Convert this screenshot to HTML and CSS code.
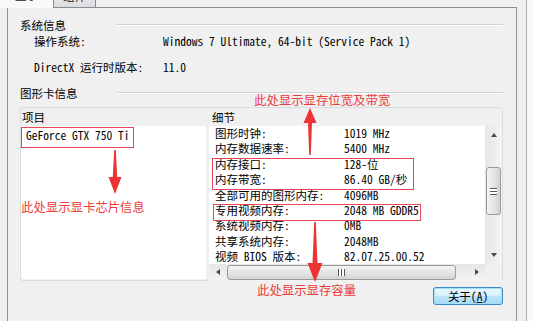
FILE: index.html
```html
<!DOCTYPE html>
<html lang="zh-CN">
<head>
    <meta charset="UTF-8">
    <title>系统信息</title>
    <link rel="stylesheet" href="styles.css">
</head>
<body>
    <div class="screen">
        <div class="main">
            <div class="tabs">
                <div class="tab tab-active">显示</div>
                <div class="tab">组件</div>
                <div class="tab-fill"></div>
            </div>

            <div class="panel">
                <div class="group-title"><span>系统信息</span><i></i></div>
                <div class="info-row">
                    <span class="info-label">操作系统:</span>
                    <span>Windows 7 Ultimate, 64-bit (Service Pack 1)</span>
                </div>
                <div class="info-row info-row-gap">
                    <span class="info-label">DirectX 运行时版本:</span>
                    <span>11.0</span>
                </div>

                <div class="group-title group-title-gap"><span>图形卡信息</span><i></i></div>

                <div class="list-box">
                    <div class="list-head">
                        <div class="head-left">项目</div>
                        <div class="head-right">细节</div>
                    </div>
                    <div class="list-body">
                        <div class="pane-left">
                            <div class="item-row">GeForce GTX 750 Ti</div>
                        </div>
                        <div class="pane-right">
                            <div class="details">
                                <div class="detail-row"><span class="detail-label">图形时钟:</span><span>1019 MHz</span></div>
                                <div class="detail-row"><span class="detail-label">内存数据速率:</span><span>5400 MHz</span></div>
                                <div class="detail-row"><span class="detail-label">内存接口:</span><span>128-位</span></div>
                                <div class="detail-row"><span class="detail-label">内存带宽:</span><span>86.40 GB/秒</span></div>
                                <div class="detail-row"><span class="detail-label">全部可用的图形内存:</span><span>4096MB</span></div>
                                <div class="detail-row"><span class="detail-label">专用视频内存:</span><span>2048 MB GDDR5</span></div>
                                <div class="detail-row"><span class="detail-label">系统视频内存:</span><span>0MB</span></div>
                                <div class="detail-row"><span class="detail-label">共享系统内存:</span><span>2048MB</span></div>
                                <div class="detail-row"><span class="detail-label">视频 BIOS 版本:</span><span>82.07.25.00.52</span></div>
                            </div>
                            <div class="vscroll">
                                <div class="sb-btn"><i class="arrow arrow-up"></i></div>
                                <div class="vtrack">
                                    <div class="vthumb"><span class="grip-v"></span></div>
                                </div>
                                <div class="sb-btn"><i class="arrow arrow-down"></i></div>
                            </div>
                            <div class="hscroll">
                                <div class="sb-btn"><i class="arrow arrow-left"></i></div>
                                <div class="htrack">
                                    <div class="hthumb"><span class="grip-h"></span></div>
                                </div>
                                <div class="sb-btn"><i class="arrow arrow-right"></i></div>
                            </div>
                            <div class="sb-corner"></div>
                        </div>
                    </div>
                </div>

                <div class="actions">
                    <button class="btn">关于(<u>A</u>)</button>
                </div>
            </div>
        </div>
        <div class="edge"><div class="edge-inner"></div></div>
    </div>

    <!-- annotations drawn over the screenshot -->
    <div class="notes">
        <div class="note note-top">此处显示显存位宽及带宽</div>
        <div class="note note-left">此处显示显卡芯片信息</div>
        <div class="note note-bottom">此处显示显存容量</div>
        <div class="mark mark-chip"></div>
        <div class="mark mark-bus"></div>
        <div class="mark mark-vram"></div>
        <svg class="arrows" width="533" height="321" viewBox="0 0 533 321">
            <polygon points="310,108 316.5,123 312,123 310.8,155 309.2,155 308,123 303.5,123" />
            <polygon points="114.2,150 115.8,150 117.2,177 121.5,177 115,194 108.5,177 112.8,177" />
            <polygon points="314.2,222 315.8,222 317.5,263 322.5,263 315,282 307.5,263 312.5,263" />
        </svg>
    </div>
</body>
</html>
```

FILE: styles.css
```css
body {
    margin: 0;
    width: 533px;
    height: 321px;
    overflow: hidden;
    position: relative;
    background: #f0f0f0;
    font-family: "Noto Sans Mono CJK SC", "Noto Sans CJK SC", "Liberation Mono", monospace;
    font-size: 11.5px;
    color: #000;
}

.screen {
    display: flex;
    height: 321px;
}

.main {
    width: 517px;
    display: flex;
    flex-direction: column;
}

.edge {
    flex: 1;
    padding-left: 9px;
}

.edge-inner {
    height: 100%;
    border-left: 1px solid #adb1b5;
    background: #f8f8f8;
}

/* tabs, only their lower edge is visible */
.tabs {
    display: flex;
    align-items: flex-end;
    height: 8px;
    overflow: hidden;
}

.tab {
    width: 42px;
    height: 21px;
    line-height: 16px;
    padding-top: 1px;
    box-sizing: border-box;
    text-align: center;
    border-right: 1px solid #898c95;
    border-bottom: 1px solid #898c95;
    background: linear-gradient(#f2f2f2, #dcdcdc);
    color: #1a1a1a;
}

.tab-active {
    width: 54px;
    height: 22px;
    border-bottom: none;
    background: #f9f9f9;
}

.tab-fill {
    flex: 1;
    height: 1px;
    background: #898c95;
}

.panel {
    flex: 1;
    margin-left: 7px;
    border-left: 1px solid #8e9297;
    border-right: 1px solid #8e9297;
    padding: 9px 13px 0 12px;
}

.group-title {
    display: flex;
    align-items: center;
    height: 16px;
    line-height: 16px;
}

.group-title span {
    width: 97px;
}

.group-title i {
    flex: 1;
    border-top: 1px solid #cfd3d6;
    border-bottom: 1px solid #fff;
}

.group-title-gap {
    margin-top: 10px;
}

.info-row {
    display: flex;
    height: 16px;
    line-height: 16px;
    padding-left: 14px;
    white-space: nowrap;
}

.info-row-gap {
    margin-top: 10px;
}

.info-label {
    width: 129px;
}

/* list views */
.list-box {
    margin-top: 6px;
    height: 174px;
    box-sizing: border-box;
    border: 1px solid #d9dde0;
    border-radius: 3px;
    display: flex;
    flex-direction: column;
}

.list-head {
    display: flex;
    height: 18px;
    line-height: 18px;
}

.head-left {
    width: 185px;
    padding-left: 1px;
    box-sizing: border-box;
}

.head-right {
    margin-left: 3px;
    padding-left: 3px;
}

.list-body {
    display: flex;
    gap: 3px;
    height: 153px;
}

.pane-left {
    width: 185px;
    background: #fff;
}

.item-row {
    height: 16px;
    line-height: 16px;
    padding: 0 0 0 5px;
    margin-top: 1px;
    white-space: nowrap;
}

.pane-right {
    flex: 1;
    display: grid;
    grid-template-columns: 1fr 17px;
    grid-template-rows: 1fr 17px;
}

.details {
    background: #fff;
}

.detail-row {
    display: flex;
    align-items: center;
    height: 15.375px;
    line-height: 12px;
    padding-left: 6px;
    white-space: nowrap;
}

.detail-row:first-child {
    margin-top: -0.7px;
}

.detail-label {
    width: 129px;
}

/* scrollbars */
.vscroll {
    display: flex;
    flex-direction: column;
    background: linear-gradient(90deg, #e6e6e6, #f4f4f4);
}

.hscroll {
    display: flex;
    background: linear-gradient(#e6e6e6, #f4f4f4);
}

.sb-corner {
    background: #f0f0f0;
}

.sb-btn {
    width: 17px;
    height: 17px;
    display: flex;
    align-items: center;
    justify-content: center;
    flex: none;
}

.arrow {
    width: 0;
    height: 0;
    border: 3px solid transparent;
}

.arrow-up {
    border-bottom: 4px solid #4a4a4a;
    border-top: none;
}

.arrow-down {
    border-top: 4px solid #4a4a4a;
    border-bottom: none;
}

.arrow-left {
    border-right: 4px solid #4a4a4a;
    border-left: none;
}

.arrow-right {
    border-left: 4px solid #4a4a4a;
    border-right: none;
}

.vtrack {
    flex: 1;
    padding: 24px 1px 0;
}

.vthumb {
    height: 48px;
    border: 1px solid #9a9a9a;
    border-radius: 3px;
    box-sizing: border-box;
    background: linear-gradient(90deg, #f4f4f4, #e2e2e2 60%, #d2d2d2);
    display: flex;
    align-items: center;
    justify-content: center;
}

.grip-v {
    width: 7px;
    height: 5px;
    border-top: 1px solid #555;
    border-bottom: 1px solid #555;
    background: linear-gradient(#fff 0 2px, #555 2px 3px, #fff 3px);
}

.htrack {
    flex: 1;
    padding: 1px 0 1px 1px;
    display: flex;
}

.hthumb {
    width: 229px;
    border: 1px solid #9a9a9a;
    border-radius: 3px;
    box-sizing: border-box;
    background: linear-gradient(#f4f4f4, #e2e2e2 60%, #d2d2d2);
    display: flex;
    align-items: center;
    justify-content: center;
}

.grip-h {
    width: 5px;
    height: 7px;
    border-left: 1px solid #555;
    border-right: 1px solid #555;
    background: linear-gradient(90deg, #fff 0 2px, #555 2px 3px, #fff 3px);
}

.actions {
    display: flex;
    justify-content: flex-end;
    margin-top: 6px;
}

.btn {
    width: 70px;
    height: 18px;
    padding: 0;
    border: 1px solid #3c8cc8;
    border-radius: 3px;
    background: linear-gradient(#eaf6fd 0%, #d9f0fc 50%, #bee6fd 51%, #a7d9f5 100%);
    box-shadow: inset 0 0 0 1px #9fe0fb;
    font-family: "Noto Sans Mono CJK SC", "Noto Sans CJK SC", monospace;
    font-size: 11.5px;
    line-height: 16px;
    color: #000;
}

/* red annotations */
.notes {
    position: absolute;
    inset: 0;
    pointer-events: none;
}

.note {
    position: absolute;
    font-family: "Noto Sans CJK SC", sans-serif;
    font-size: 12.4px;
    line-height: 14px;
    color: #ec3b3b;
    white-space: nowrap;
}

.note-top {
    left: 254px;
    top: 93px;
}

.note-left {
    left: 21px;
    top: 200px;
}

.note-bottom {
    left: 257px;
    top: 283px;
}

.mark {
    position: absolute;
    border: 1px solid #e64658;
    box-sizing: border-box;
}

.mark-chip {
    left: 21px;
    top: 127px;
    width: 113px;
    height: 21px;
}

.mark-bus {
    left: 212px;
    top: 158px;
    width: 202px;
    height: 32px;
}

.mark-vram {
    left: 213px;
    top: 204px;
    width: 208px;
    height: 17px;
}

.arrows {
    position: absolute;
    left: 0;
    top: 0;
}

.arrows polygon {
    fill: #ec3434;
}
```
